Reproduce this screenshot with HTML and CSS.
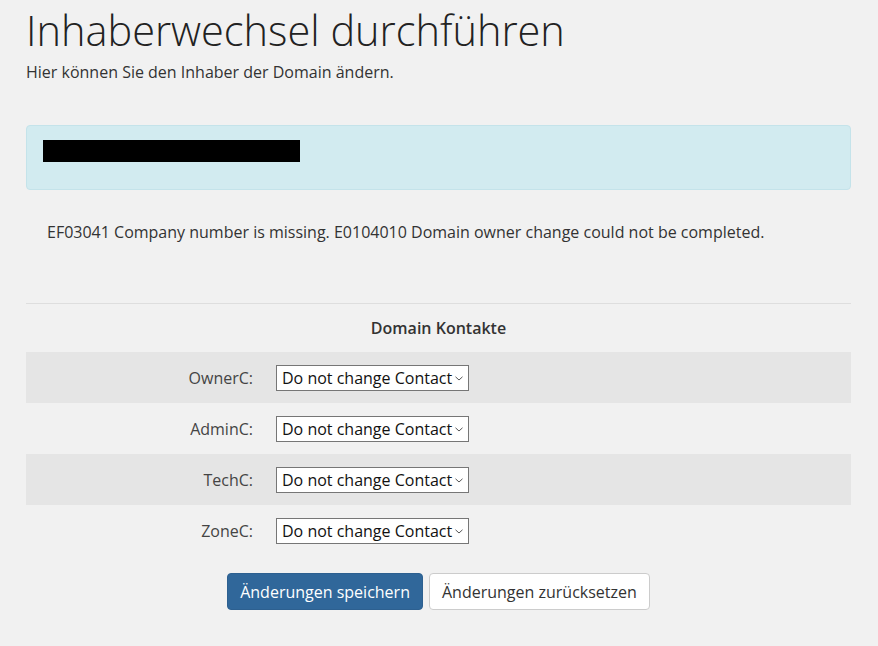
FILE: index.html
```html
<!DOCTYPE html>
<html lang="de">
<head>
    <meta charset="UTF-8">
    <meta name="viewport" content="width=device-width, initial-scale=1.0">
    <title>Inhaberwechsel durchführen</title>
    <link rel="stylesheet" href="styles.css">
</head>
<body>

    <!-- Header -->
    <header class="page-header">
        <h1>Inhaberwechsel durchführen</h1>
        <p>Hier können Sie den Inhaber der Domain ändern.</p>
    </header>

    <!-- Info box (domain name redacted) -->
    <div class="alert-info">
        <span class="redacted"></span>
    </div>

    <p class="error-msg">EF03041 Company number is missing. E0104010 Domain owner change could not be completed.</p>

    <hr class="divider">

    <!-- Contacts form -->
    <form class="contacts">
        <h3>Domain Kontakte</h3>

        <div class="contact-row">
            <label for="ownerc">OwnerC:</label>
            <div class="select-wrap">
                <select id="ownerc"><option>Do not change Contact</option></select>
                <svg class="chevron" width="8" height="5" viewBox="0 0 8 5"><path d="M0.5 0.8 L4 4 L7.5 0.8" fill="none" stroke="#555" stroke-width="1"/></svg>
            </div>
        </div>
        <div class="contact-row">
            <label for="adminc">AdminC:</label>
            <div class="select-wrap">
                <select id="adminc"><option>Do not change Contact</option></select>
                <svg class="chevron" width="8" height="5" viewBox="0 0 8 5"><path d="M0.5 0.8 L4 4 L7.5 0.8" fill="none" stroke="#555" stroke-width="1"/></svg>
            </div>
        </div>
        <div class="contact-row">
            <label for="techc">TechC:</label>
            <div class="select-wrap">
                <select id="techc"><option>Do not change Contact</option></select>
                <svg class="chevron" width="8" height="5" viewBox="0 0 8 5"><path d="M0.5 0.8 L4 4 L7.5 0.8" fill="none" stroke="#555" stroke-width="1"/></svg>
            </div>
        </div>
        <div class="contact-row">
            <label for="zonec">ZoneC:</label>
            <div class="select-wrap">
                <select id="zonec"><option>Do not change Contact</option></select>
                <svg class="chevron" width="8" height="5" viewBox="0 0 8 5"><path d="M0.5 0.8 L4 4 L7.5 0.8" fill="none" stroke="#555" stroke-width="1"/></svg>
            </div>
        </div>

        <div class="actions">
            <button type="submit" class="btn btn-primary">Änderungen speichern</button>
            <button type="reset" class="btn btn-default">Änderungen zurücksetzen</button>
        </div>
    </form>

</body>
</html>
```

FILE: styles.css
```css
body {
    margin: 0;
    padding: 0 27px 0 26px;
    background-color: #f1f1f1;
    color: #333;
    font-family: "Open Sans", "Liberation Sans", sans-serif;
    font-size: 16px;
}
.page-header h1 {
    margin: 0;
    padding-top: 6px;
    font-size: 41.5px;
    font-weight: 300;
    line-height: 48px;
    color: #222;
}
.page-header p {
    margin: 7px 0 0;
    line-height: 22px;
}
.alert-info {
    margin-top: 42px;
    padding: 14px 16px 0 16px;
    box-sizing: border-box;
    height: 65px;
    background-color: #d2ebf0;
    border: 1px solid #c4e3ea;
    border-radius: 4px;
}
.redacted {
    display: block;
    width: 257px;
    height: 22px;
    background-color: #000;
}
.error-msg {
    margin: 31px 0 0;
    padding-left: 21px;
    line-height: 22px;
}
.divider {
    margin: 60px 0 0;
    border: 0;
    border-top: 1px solid #dedede;
}
.contacts h3 {
    margin: 0;
    padding: 14px 0 14px;
    text-align: center;
    font-size: 16px;
    font-weight: 600;
    line-height: 20px;
}
.contact-row {
    display: flex;
    align-items: center;
    height: 51px;
}
.contact-row:nth-of-type(odd) {
    background-color: #e5e5e5;
}
.contact-row label {
    width: 227px;
    text-align: right;
    margin-right: 23px;
    font-size: 16px;
    color: #444;
}
.select-wrap {
    position: relative;
}
.select-wrap select {
    -webkit-appearance: none;
    appearance: none;
    width: 193px;
    height: 26px;
    padding: 0 0 0 5px;
    border: 1px solid #767676;
    border-radius: 0;
    background-color: #fff;
    font-family: "Open Sans", "Liberation Sans", sans-serif;
    font-size: 16px;
    color: #111;
}
.chevron {
    position: absolute;
    right: 6px;
    top: 11px;
    pointer-events: none;
}
.actions {
    display: flex;
    justify-content: center;
    gap: 6px;
    margin-top: 17px;
}
.btn {
    height: 37px;
    padding: 0 12px;
    border-radius: 4px;
    font-family: "Open Sans", "Liberation Sans", sans-serif;
    font-size: 16px;
    cursor: pointer;
}
.btn-primary {
    background-color: #30679a;
    border: 1px solid #2d6090;
    color: #fff;
}
.btn-default {
    background-color: #fff;
    border: 1px solid #ccc;
    color: #333;
}
```
